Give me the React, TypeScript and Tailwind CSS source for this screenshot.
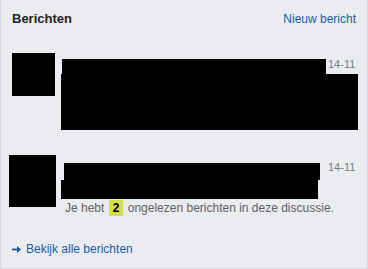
import type { ReactNode } from 'react'

function Redacted({ className }: { className: string }) {
  return <div className={`bg-black ${className}`} />
}

function DateLabel({ children, className }: { children: ReactNode; className?: string }) {
  return <span className={`text-[11px] leading-[13px] text-[#7a7b7e] ${className || ''}`}>{children}</span>
}

export default function App() {
  return (
    <div className="h-[269px] w-[368px] border-x border-b border-[#dadbde] bg-[#ebecef] font-['Liberation_Sans',Arial,sans-serif] text-[12px] leading-4">
      {/* header */}
      <div className="flex items-center justify-between pl-[11px] pr-[11px] pt-[11px]">
        <h2 className="text-[13px] font-bold leading-4 text-[#222]">Berichten</h2>
        <a href="#" className="text-[12px] leading-4 text-[#1d5aa4]">
          Nieuw bericht
        </a>
      </div>

      {/* message 1 */}
      <div className="mt-[26px] flex">
        <Redacted className="ml-[11px] h-[43px] w-[43px] shrink-0" />
        <div className="ml-[6px]">
          <div className="flex items-start">
            <Redacted className="ml-[1px] mt-[6px] h-[15px] w-[264px]" />
            <DateLabel className="ml-[2px] mt-[5px]">14-11</DateLabel>
          </div>
          <Redacted className="h-[56px] w-[297px]" />
        </div>
      </div>

      {/* message 2 */}
      <div className="mt-[25px] flex">
        <Redacted className="ml-[8px] h-[52px] w-[47px] shrink-0" />
        <div className="ml-[5px]">
          <div className="flex items-start">
            <Redacted className="ml-[3px] mt-[8px] h-[17px] w-[256px]" />
            <DateLabel className="ml-[8px] mt-[6px]">14-11</DateLabel>
          </div>
          <Redacted className="h-[19px] w-[257px]" />
          <p className="mt-[1px] pl-[4px] text-[#5f6063]">
            Je hebt{' '}
            <span className="mx-[1px] inline-block bg-[#d4e04a] px-[4px] font-bold text-black">2</span>{' '}
            ongelezen berichten in deze discussie.
          </p>
        </div>
      </div>

      {/* footer */}
      <a href="#" className="mt-[25px] ml-[10px] flex items-center gap-[4px] text-[#1d5aa4]">
        <svg width="11" height="9" viewBox="0 0 11 9" fill="none">
          <path d="M1 4.5h6" stroke="currentColor" strokeWidth="1.8" />
          <path d="M6 1l4 3.5L6 8z" fill="currentColor" />
        </svg>
        Bekijk alle berichten
      </a>
    </div>
  )
}
